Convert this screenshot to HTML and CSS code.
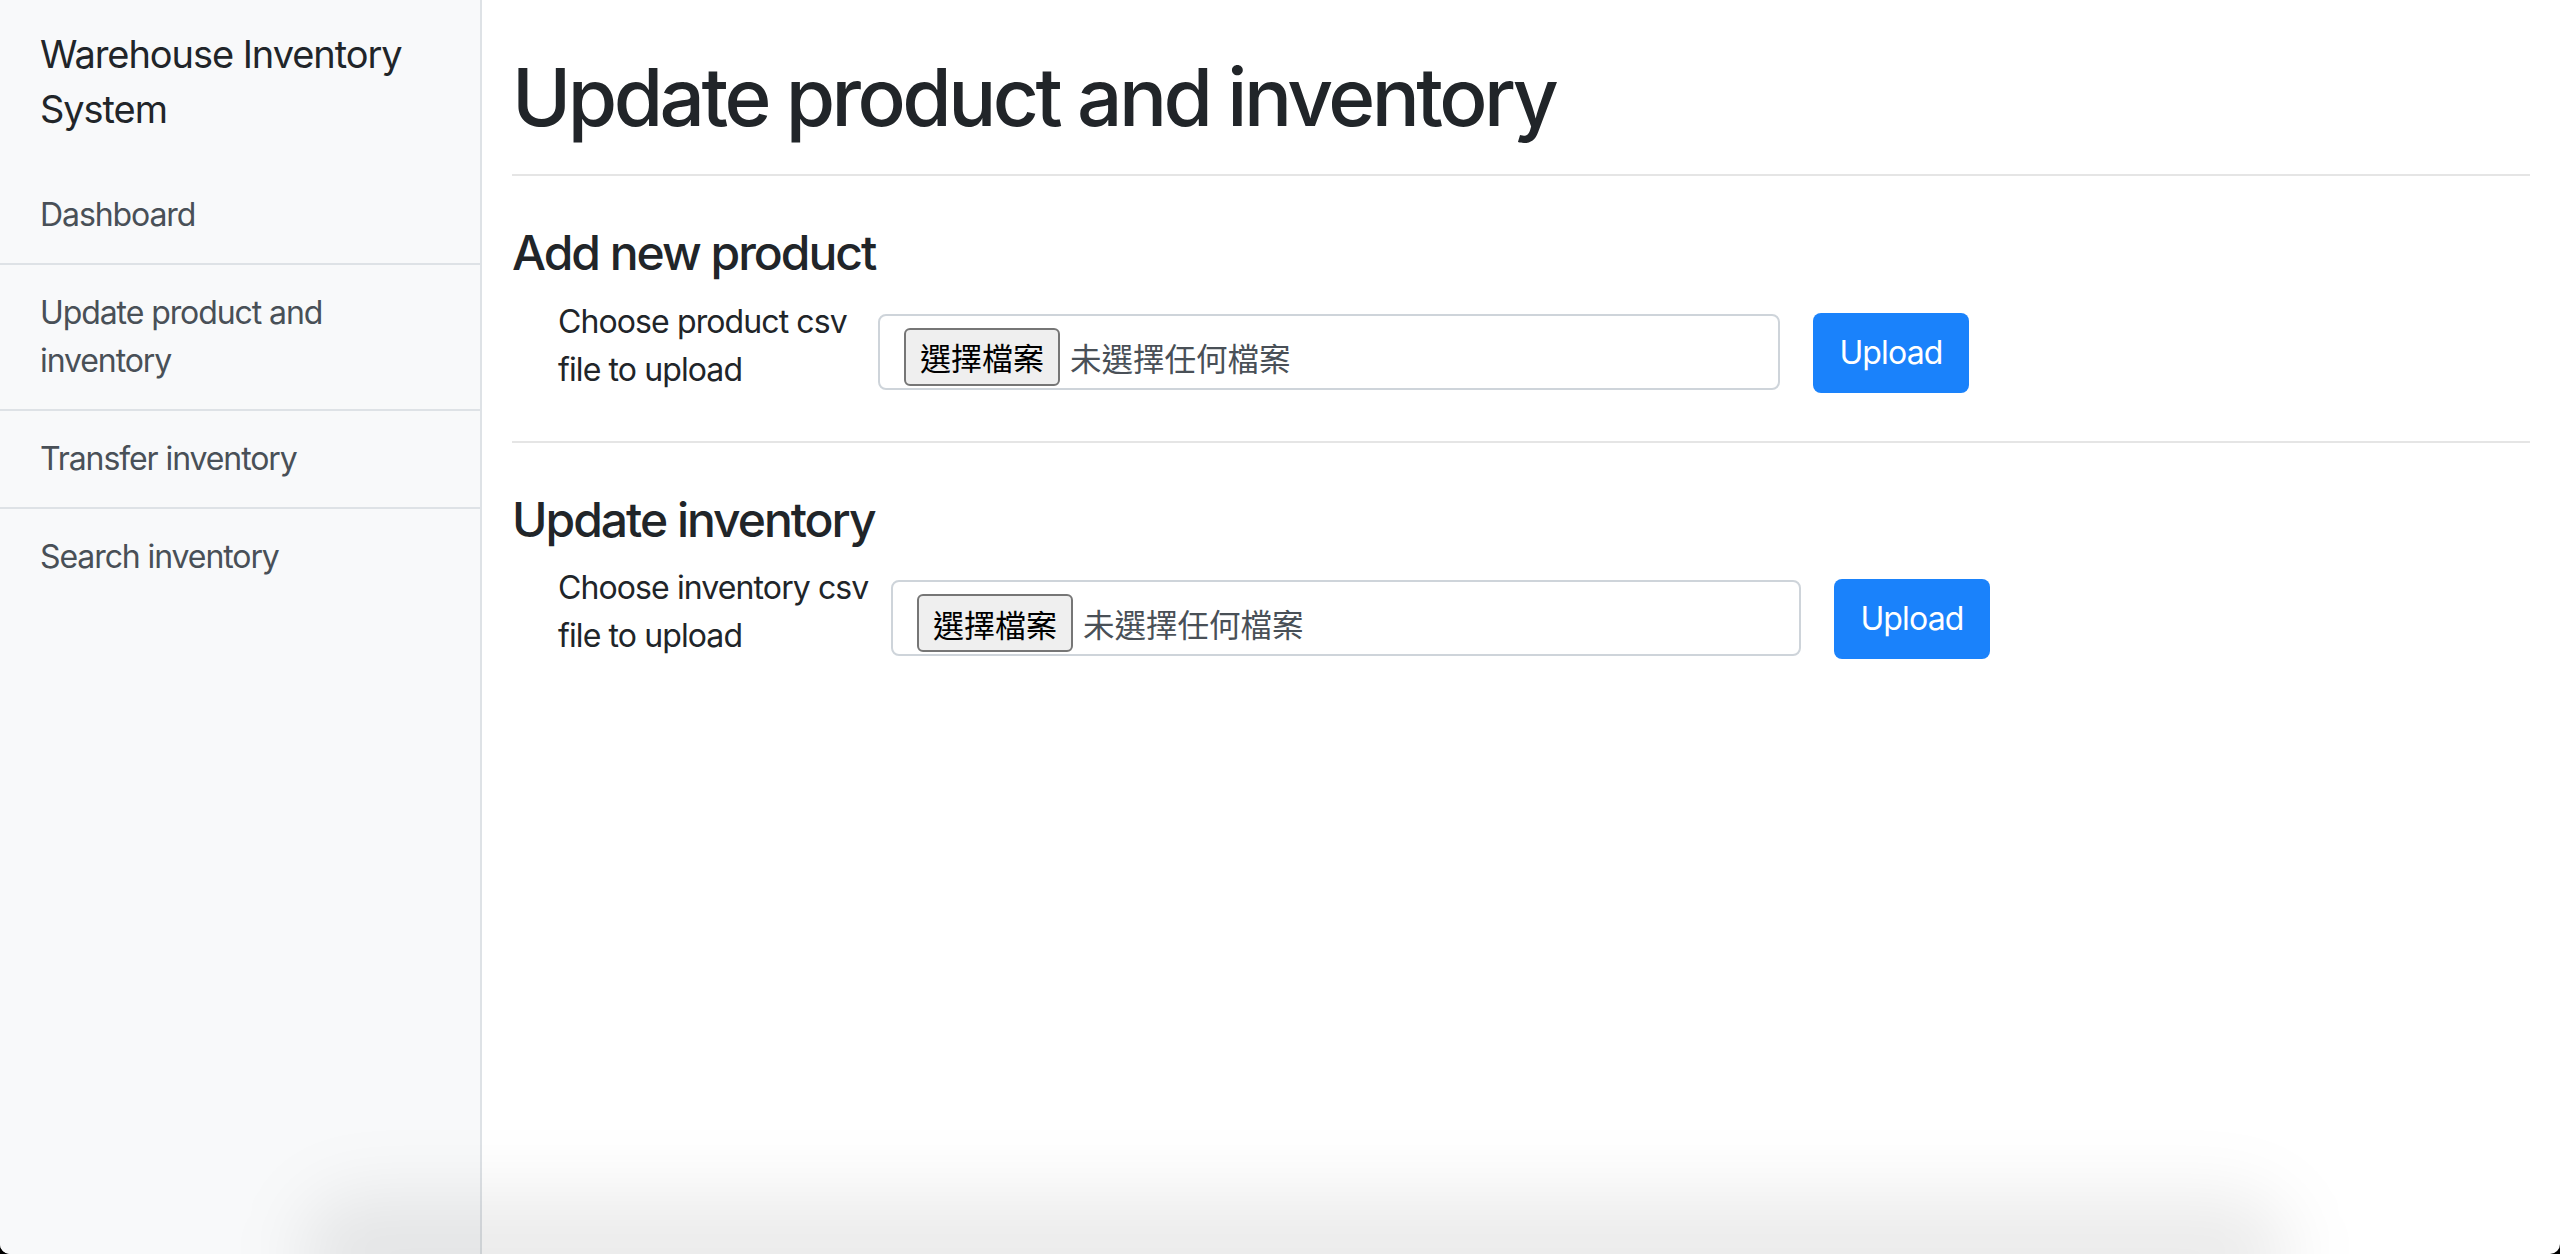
FILE: index.html
```html
<!DOCTYPE html>
<html lang="zh-Hant">
<head>
<meta charset="utf-8">
<title>Update product and inventory</title>
<link rel="stylesheet" href="styles.css">
</head>
<body>
<div class="app">
  <aside class="sidebar">
    <div class="brand">Warehouse Inventory System</div>
    <nav class="nav">
      <a class="nav-item" href="#">Dashboard</a>
      <a class="nav-item" href="#">Update product and inventory</a>
      <a class="nav-item" href="#">Transfer inventory</a>
      <a class="nav-item" href="#">Search inventory</a>
    </nav>
  </aside>
  <main class="main">
    <h1 class="page-title">Update product and inventory</h1>
    <section class="section">
      <hr class="rule">
      <h4 class="section-title">Add new product</h4>
      <form class="upload-row">
        <label class="file-label file-label--product">Choose product csv file to upload</label>
        <div class="file-field file-field--product">
          <span class="file-button">選擇檔案</span>
          <span class="file-status">未選擇任何檔案</span>
        </div>
        <button type="button" class="upload-btn">Upload</button>
      </form>
    </section>
    <section class="section">
      <hr class="rule">
      <h4 class="section-title">Update inventory</h4>
      <form class="upload-row">
        <label class="file-label file-label--inventory">Choose inventory csv file to upload</label>
        <div class="file-field file-field--inventory">
          <span class="file-button">選擇檔案</span>
          <span class="file-status">未選擇任何檔案</span>
        </div>
        <button type="button" class="upload-btn">Upload</button>
      </form>
    </section>
  </main>
  <div class="dock-shadow"></div>
</div>
</body>
</html>
```

FILE: styles.css
```css
html {
  background: #000;
}
body {
  margin: 0;
  font-family: Inter, "Noto Sans CJK TC", "Liberation Sans", sans-serif;
  letter-spacing: -0.026em;
  color: #212529;
}
.app {
  position: relative;
  display: flex;
  height: 100vh;
  overflow: hidden;
  background: #fff;
  border-radius: 0 0 10px 10px;
}
.sidebar {
  width: 480px;
  flex: 0 0 480px;
  background: #f8f9fa;
  border-right: 2px solid #dee2e6;
  display: flex;
  flex-direction: column;
}
.brand {
  padding: 27px 40px 30px;
  font-size: 38px;
  line-height: 55px;
  letter-spacing: -0.028em;
  color: #212529;
}
.nav {
  display: flex;
  flex-direction: column;
}
.nav-item {
  display: block;
  padding: 24px 40px;
  font-size: 32px;
  line-height: 48px;
  letter-spacing: -0.034em;
  color: #495057;
  text-decoration: none;
}
.nav-item + .nav-item {
  border-top: 2px solid #dee2e6;
}
.main {
  flex: 1;
  padding: 0 30px;
  min-width: 0;
}
.page-title {
  margin: 49px 0 29px;
  font-size: 80px;
  line-height: 96px;
  font-weight: 500;
  color: #212529;
  letter-spacing: -0.044em;
}
.rule {
  margin: 0 0 48px;
  border: 0;
  border-top: 2px solid #e5e5e5;
}
.section-title {
  margin: 0 0 16px;
  font-size: 48px;
  line-height: 57.6px;
  font-weight: 500;
  color: #212529;
  letter-spacing: -0.042em;
}
.upload-row {
  display: flex;
  align-items: flex-start;
  padding-left: 46px;
  margin: 0 0 47px;
}
.file-label {
  flex: 0 0 auto;
  font-size: 32px;
  line-height: 48px;
  letter-spacing: -0.028em;
  color: #212529;
}
.file-label--product {
  width: 320px;
}
.file-label--inventory {
  width: 333px;
}
.file-field {
  box-sizing: border-box;
  flex: 0 0 auto;
  height: 76px;
  margin-top: 16px;
  padding: 12px 24px;
  border: 2px solid #ced4da;
  border-radius: 8px;
  display: flex;
  align-items: flex-start;
  gap: 10px;
  font-family: "Noto Sans CJK TC", sans-serif;
  letter-spacing: 0;
  font-size: 32px;
}
.file-field--product {
  width: 902px;
}
.file-field--inventory {
  width: 910px;
}
.file-button {
  box-sizing: border-box;
  height: 58px;
  padding: 0 14px;
  display: flex;
  align-items: center;
  background: #efefef;
  border: 2px solid #767676;
  border-radius: 6px;
  color: #000;
  font-size: 31px;
}
.file-status {
  height: 58px;
  display: flex;
  align-items: center;
  color: #495057;
  font-size: 31.5px;
}
.upload-btn {
  flex: 0 0 auto;
  box-sizing: border-box;
  width: 156px;
  height: 80px;
  margin: 15px 0 0 33px;
  padding: 0;
  border: 0;
  border-radius: 8px;
  background: #1a82fb;
  color: #fff;
  font-family: Inter, "Liberation Sans", sans-serif;
  letter-spacing: -0.026em;
  font-size: 32px;
  line-height: 48px;
}
.dock-shadow {
  position: absolute;
  left: 300px;
  right: 270px;
  bottom: -60px;
  height: 120px;
  background: rgba(0, 0, 0, 0.08);
  border-radius: 60px;
  filter: blur(35px);
  pointer-events: none;
}
```
